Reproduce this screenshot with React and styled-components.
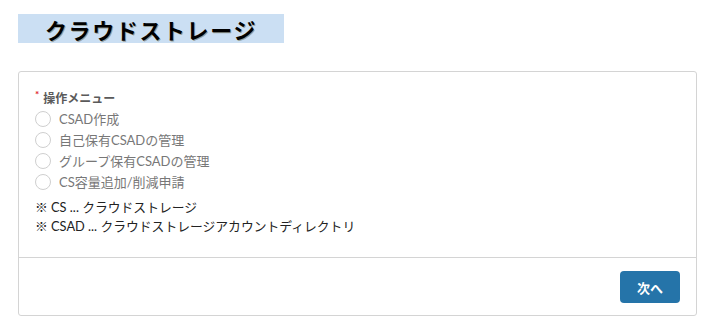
import styled, { createGlobalStyle } from 'styled-components'

const GlobalStyle = createGlobalStyle`
  body {
    margin: 0;
    background: #fff;
    font-family: Lato, "Noto Sans CJK JP", sans-serif;
  }
`

const Page = styled.div`
  padding: 14px 20px 0 18px;
`

const TitleBar = styled.h1`
  margin: 0;
  width: 266px;
  height: 29px;
  background: #cbdff3;
  display: flex;
  align-items: center;
  justify-content: center;
  font-family: "Noto Sans CJK JP", sans-serif;
  font-size: 22px;
  font-weight: 700;
  letter-spacing: 1.6px;
  color: #000;
  text-shadow: 1px 1px 0 rgba(90, 80, 40, 0.45);
`

const Card = styled.section`
  margin-top: 28px;
  border: 1px solid #d4d4d4;
  border-radius: 3px;
  background: #fff;
`

const Body = styled.div`
  padding: 16px 16px 21px 16px;
`

const FieldLabel = styled.div`
  font-size: 12px;
  font-weight: 700;
  color: #5a5a5a;
  display: flex;
  align-items: center;
  height: 18px;
  margin-bottom: 2px;
`

const Required = styled.span`
  color: #e0202a;
  font-size: 10px;
  margin-right: 4px;
  position: relative;
  top: -3px;
`

const RadioList = styled.div`
  display: flex;
  flex-direction: column;
`

const RadioRow = styled.label`
  display: flex;
  align-items: center;
  height: 21px;
  font-size: 13px;
  color: #777;
`

const Circle = styled.span`
  width: 14px;
  height: 14px;
  border: 1px solid #cfcfcf;
  border-radius: 50%;
  margin-right: 8px;
  flex-shrink: 0;
`

const Notes = styled.div`
  margin-top: 6px;
  font-size: 12.8px;
  line-height: 19px;
  color: #222;
`

const Footer = styled.div`
  border-top: 1px solid #d4d4d4;
  display: flex;
  justify-content: flex-end;
  padding: 13px 16px 12px;
`

const Button = styled.button`
  width: 60px;
  height: 32px;
  border: none;
  border-radius: 4px;
  background: #2574a9;
  color: #fff;
  font-family: "Noto Sans CJK JP", sans-serif;
  font-size: 13px;
  font-weight: 700;
  cursor: pointer;
`

const options = ['CSAD作成', '自己保有CSADの管理', 'グループ保有CSADの管理', 'CS容量追加/削減申請']

export default function App() {
  return (
    <Page>
      <GlobalStyle />
      <TitleBar>クラウドストレージ</TitleBar>
      <Card>
        <Body>
          <FieldLabel>
            <Required>*</Required>操作メニュー
          </FieldLabel>
          <RadioList>
            {options.map((o) => (
              <RadioRow key={o}>
                <Circle />
                {o}
              </RadioRow>
            ))}
          </RadioList>
          <Notes>
            <div>※ CS ... クラウドストレージ</div>
            <div>※ CSAD ... クラウドストレージアカウントディレクトリ</div>
          </Notes>
        </Body>
        <Footer>
          <Button>次へ</Button>
        </Footer>
      </Card>
    </Page>
  )
}
